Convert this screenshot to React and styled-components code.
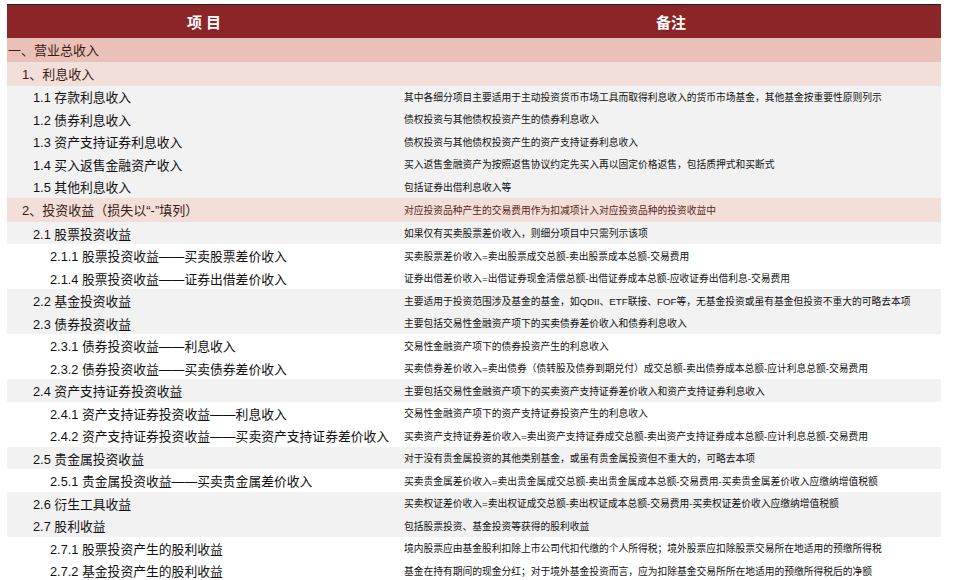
import { createGlobalStyle, styled } from "styled-components";

const Global = createGlobalStyle`
  body { margin: 0; background: #fff; font-family: "Liberation Sans", "Noto Sans CJK SC", sans-serif; }
`;

const Table = styled.div`
  margin: 4px 0 0 7px;
  width: 934px;
  border-top: 1.5px solid #222;
`;
const Header = styled.div`
  display: grid;
  grid-template-columns: 394px 1fr;
  height: 33px;
  align-items: center;
  background: #8b2527;
  color: #fff;
  font-weight: bold;
  font-size: 15px;
  text-align: center;
`;
const bgs = { 1: "#e9c1b8", 2: "#f3dfda", gray: "#f2f2f2", white: "#fff" };
const Row = styled.div`
  display: grid;
  grid-template-columns: 394px 1fr;
  align-items: center;
  height: ${(p) => (p.$lvl <= 2 ? 23.8 : 22.5)}px;
  background: ${(p) => bgs[p.$bg]};
`;
const Item = styled.div`
  padding-left: ${(p) => [0, 1, 15, 26, 43][p.$lvl]}px;
  font-size: ${(p) => (p.$lvl <= 2 ? 13 : 12.8)}px;
  color: ${(p) => (p.$lvl <= 2 ? "#3a1a14" : "#111")};
  white-space: nowrap;
`;
const Note = styled.div`
  padding-left: 3px;
  font-size: 9.75px;
  color: ${(p) => (p.$lvl === 2 ? "#5a1f18" : "#111")};
  white-space: nowrap;
`;

const rows = [
  [1, "一、营业总收入", ""],
  [2, "1、利息收入", ""],
  [3, "1.1 存款利息收入", "其中各细分项目主要适用于主动投资货币市场工具而取得利息收入的货币市场基金，其他基金按重要性原则列示"],
  [3, "1.2 债券利息收入", "债权投资与其他债权投资产生的债券利息收入"],
  [3, "1.3 资产支持证券利息收入", "债权投资与其他债权投资产生的资产支持证券利息收入"],
  [3, "1.4 买入返售金融资产收入", "买入返售金融资产为按照返售协议约定先买入再以固定价格返售，包括质押式和买断式"],
  [3, "1.5 其他利息收入", "包括证券出借利息收入等"],
  [2, "2、投资收益（损失以“-”填列）", "对应投资品种产生的交易费用作为扣减项计入对应投资品种的投资收益中"],
  [3, "2.1 股票投资收益", "如果仅有买卖股票差价收入，则细分项目中只需列示该项"],
  [4, "2.1.1 股票投资收益——买卖股票差价收入", "买卖股票差价收入=卖出股票成交总额-卖出股票成本总额-交易费用"],
  [4, "2.1.4 股票投资收益——证券出借差价收入", "证券出借差价收入=出借证券现金清偿总额-出借证券成本总额-应收证券出借利息-交易费用"],
  [3, "2.2 基金投资收益", "主要适用于投资范围涉及基金的基金，如QDII、ETF联接、FOF等，无基金投资或虽有基金但投资不重大的可略去本项"],
  [3, "2.3 债券投资收益", "主要包括交易性金融资产项下的买卖债券差价收入和债券利息收入"],
  [4, "2.3.1 债券投资收益——利息收入", "交易性金融资产项下的债券投资产生的利息收入"],
  [4, "2.3.2 债券投资收益——买卖债券差价收入", "买卖债券差价收入=卖出债券（债转股及债券到期兑付）成交总额-卖出债券成本总额-应计利息总额-交易费用"],
  [3, "2.4 资产支持证券投资收益", "主要包括交易性金融资产项下的买卖资产支持证券差价收入和资产支持证券利息收入"],
  [4, "2.4.1 资产支持证券投资收益——利息收入", "交易性金融资产项下的资产支持证券投资产生的利息收入"],
  [4, "2.4.2 资产支持证券投资收益——买卖资产支持证券差价收入", "买卖资产支持证券差价收入=卖出资产支持证券成交总额-卖出资产支持证券成本总额-应计利息总额-交易费用"],
  [3, "2.5 贵金属投资收益", "对于没有贵金属投资的其他类别基金，或虽有贵金属投资但不重大的，可略去本项"],
  [4, "2.5.1 贵金属投资收益——买卖贵金属差价收入", "买卖贵金属差价收入=卖出贵金属成交总额-卖出贵金属成本总额-交易费用-买卖贵金属差价收入应缴纳增值税额"],
  [3, "2.6 衍生工具收益", "买卖权证差价收入=卖出权证成交总额-卖出权证成本总额-交易费用-买卖权证差价收入应缴纳增值税额"],
  [3, "2.7 股利收益", "包括股票投资、基金投资等获得的股利收益"],
  [4, "2.7.1 股票投资产生的股利收益", "境内股票应由基金股利扣除上市公司代扣代缴的个人所得税；境外股票应扣除股票交易所在地适用的预缴所得税"],
  [4, "2.7.2 基金投资产生的股利收益", "基金在持有期间的现金分红；对于境外基金投资而言，应为扣除基金交易所所在地适用的预缴所得税后的净额"],
];

export default function App() {
  return (
    <>
      <Global />
      <Table>
        <Header>
          <div>项 目</div>
          <div>备注</div>
        </Header>
        {rows.map(([lvl, item, note], i) => (
          <Row key={i} $lvl={lvl} $bg={lvl <= 2 ? lvl : lvl === 3 ? "gray" : "white"}>
            <Item $lvl={lvl}>{item}</Item>
            <Note $lvl={lvl}>{note}</Note>
          </Row>
        ))}
      </Table>
    </>
  );
}
